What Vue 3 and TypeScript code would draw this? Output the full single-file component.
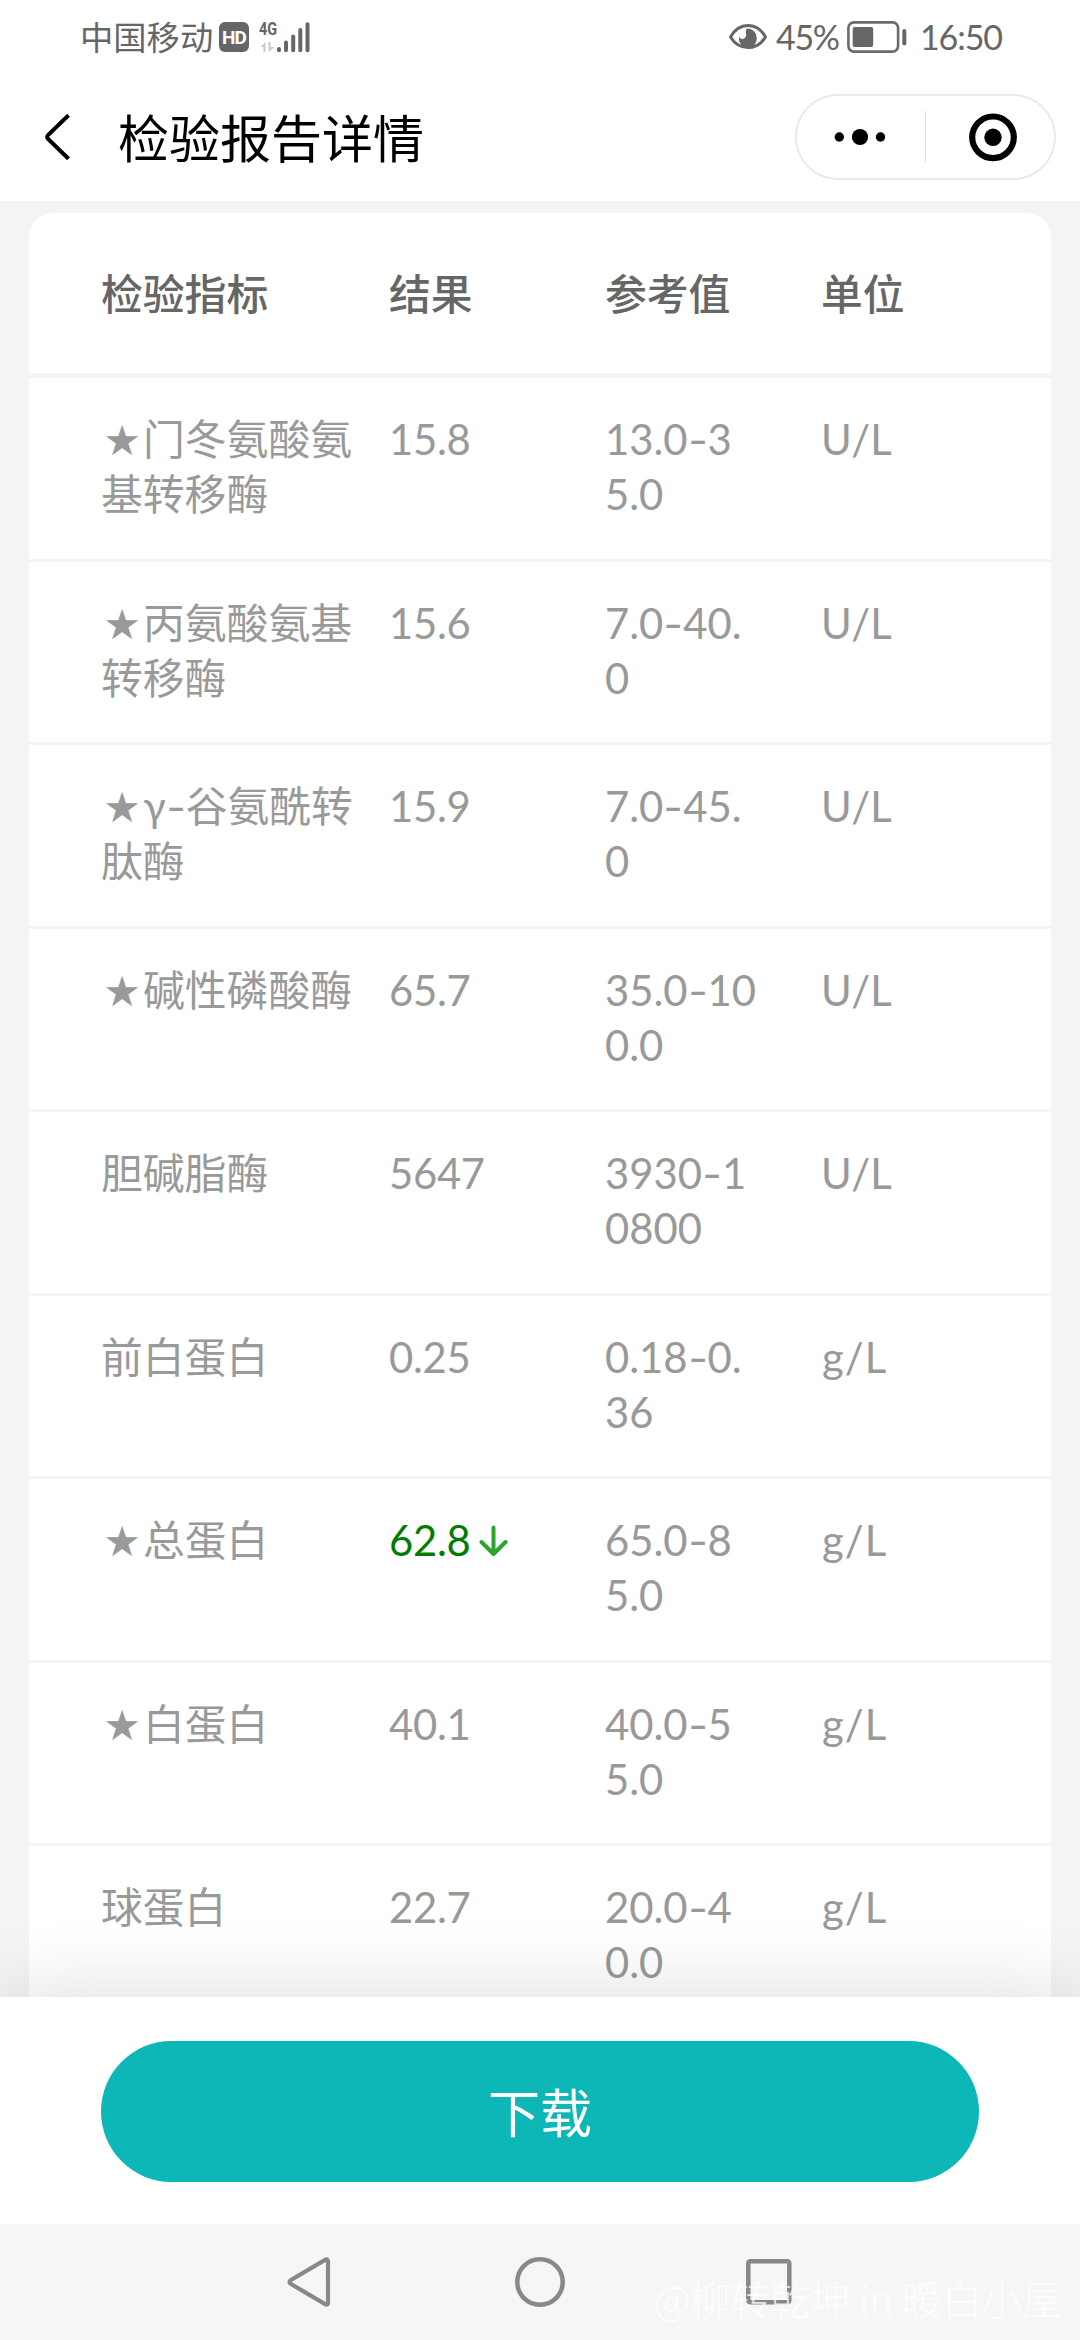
<script setup lang="ts">
interface Indicator {
  star: boolean
  name: string[]
  result: string
  low?: boolean
  range: string[]
  unit: string
}

const columns: string[] = ['检验指标', '结果', '参考值', '单位']

const rows: Indicator[] = [
  { star: true, name: ['门冬氨酸氨', '基转移酶'], result: '15.8', range: ['13.0-3', '5.0'], unit: 'U/L' },
  { star: true, name: ['丙氨酸氨基', '转移酶'], result: '15.6', range: ['7.0-40.', '0'], unit: 'U/L' },
  { star: true, name: ['γ-谷氨酰转', '肽酶'], result: '15.9', range: ['7.0-45.', '0'], unit: 'U/L' },
  { star: true, name: ['碱性磷酸酶'], result: '65.7', range: ['35.0-10', '0.0'], unit: 'U/L' },
  { star: false, name: ['胆碱脂酶'], result: '5647', range: ['3930-1', '0800'], unit: 'U/L' },
  { star: false, name: ['前白蛋白'], result: '0.25', range: ['0.18-0.', '36'], unit: 'g/L' },
  { star: true, name: ['总蛋白'], result: '62.8', low: true, range: ['65.0-8', '5.0'], unit: 'g/L' },
  { star: true, name: ['白蛋白'], result: '40.1', range: ['40.0-5', '5.0'], unit: 'g/L' },
  { star: false, name: ['球蛋白'], result: '22.7', range: ['20.0-4', '0.0'], unit: 'g/L' },
]

// Hyphens are set wider than the font's own, so each line is split around them.
const pieces = (line: string): string[] => line.split(/(-)/).filter((p) => p !== '')
</script>

<template>
  <div class="screen">
    <div class="status">
      <div class="status-left">
        <span class="carrier">中国移动</span>
        <span class="hd">HD</span>
        <div class="signal">
          <svg width="52" height="32" viewBox="0 0 52 32">
            <g fill="#c9c9c9">
              <path d="M0.5 26 L5.5 21 V31 H3.5 V26 Z" />
              <path d="M8.5 21 H10.5 V26 L14.5 26 L8.5 31 Z" />
            </g>
            <g stroke="#666" stroke-width="4" stroke-linecap="round">
              <path d="M19 28v1.3M26 21.5v7.8M33.2 15.5v13.8M40.3 9v20.3M47.5 3.2v26.1" />
            </g>
          </svg>
          <span class="net">4G</span>
        </div>
      </div>
      <div class="status-right">
        <svg class="eye" width="40" height="28" viewBox="0 0 40 28">
          <path d="M2.5 14C11 -1.2 29 -1.2 37.500 14C29 28 11 28 2.500 14Z" fill="none" stroke="#666" stroke-width="3" stroke-linejoin="round" />
          <path d="M19 5.500A9 9.800 0 1 1 11 13.500Q12.500 16.800 15.500 15.800Q19.300 14 17.800 9.500Q17.500 7 19 5.500Z" fill="#666" />
        </svg>
        <span class="percent">45%</span>
        <svg class="battery" width="60" height="32" viewBox="0 0 60 32">
          <rect x="1.400" y="1.400" width="49.700" height="29.200" rx="5.500" fill="none" stroke="#6c6c6c" stroke-width="2.600" />
          <rect x="5.700" y="6" width="20.500" height="20" rx="2" fill="#666" />
          <rect x="55.300" y="8" width="4" height="16.500" rx="2" fill="#666" />
        </svg>
        <span class="clock">16:50</span>
      </div>
    </div>

    <header class="bar">
      <svg class="back" width="28" height="50" viewBox="0 0 28 50">
        <path d="M24.500 3.200L3.800 23.400Q2.600 25 3.800 26.600L24.500 46.800" fill="none" stroke="#000" stroke-width="4" />
      </svg>
      <h1 class="title">检验报告详情</h1>
      <div class="capsule">
        <svg width="261" height="86" viewBox="0 0 261 86">
          <circle cx="44.300" cy="43" r="4.700" />
          <circle cx="65" cy="43" r="8.100" />
          <circle cx="85.500" cy="43" r="4.700" />
          <path d="M130.500 17v51" stroke="#dcdcdc" stroke-width="1" />
          <circle cx="198" cy="43.300" r="20.800" fill="none" stroke="#000" stroke-width="6.200" />
          <circle cx="198" cy="43.300" r="8.700" />
        </svg>
      </div>
    </header>

    <main class="content">
      <section class="card">
        <div class="line head">
          <span v-for="c in columns" :key="c">{{ c }}</span>
        </div>
        <div v-for="row in rows" :key="row.name[0]" class="line row">
          <div>
            <div v-for="(text, i) in row.name" :key="i" class="text"><span v-if="row.star && i === 0" class="star">★</span><span v-for="(p, j) in pieces(text)" :key="j" :class="{ dash: p === '-' }">{{ p }}</span></div>
          </div>
          <div class="text result" :class="{ low: row.low }">
            {{ row.result }}
            <svg v-if="row.low" class="arrow" width="29" height="32" viewBox="0 0 29 32">
              <path d="M14.500 2.500V28M2.500 17L14.500 29L26.500 17" fill="none" stroke="#2aa52c" stroke-width="4" stroke-linecap="round" stroke-linejoin="round" />
            </svg>
          </div>
          <div>
            <div v-for="(text, i) in row.range" :key="i" class="text"><span v-for="(p, j) in pieces(text)" :key="j" :class="{ dash: p === '-' }">{{ p }}</span></div>
          </div>
          <div class="text" :class="{ gram: row.unit === 'g/L' }">{{ row.unit }}</div>
        </div>
      </section>
    </main>

    <footer class="action">
      <button class="download" type="button">下载</button>
    </footer>

    <nav class="keys">
      <svg width="50" height="54" viewBox="0 0 50 54">
        <path d="M5.500 25.300L40.500 4.700Q43 3.600 43 6.500V47.500Q43 50.400 40.500 49.300L5.500 28.700Q3.800 27 5.500 25.300Z" fill="none" stroke="#888" stroke-width="4.200" />
      </svg>
      <svg width="54" height="54" viewBox="0 0 54 54">
        <circle cx="27" cy="27" r="22.700" fill="none" stroke="#888" stroke-width="4.500" />
      </svg>
      <svg width="50" height="54" viewBox="0 0 50 54">
        <rect x="4.300" y="6.300" width="41" height="41" rx="2" fill="none" stroke="#888" stroke-width="4.500" />
      </svg>
      <span class="watermark">@柳转乾坤 in 暖白小屋</span>
    </nav>
  </div>
</template>

<style>
body {
  margin: 0;
}
</style>

<style scoped>
.screen {
  width: 1080px;
  height: 2340px;
  display: flex;
  flex-direction: column;
  overflow: hidden;
  background: #f4f4f4;
  font-family: Lato, 'Noto Sans CJK SC', sans-serif;
}

.status {
  flex: none;
  height: 73px;
  box-sizing: border-box;
  padding: 0 77px 0 80px;
  display: flex;
  justify-content: space-between;
  background: #fff;
  color: #666;
}

.status-left,
.status-right {
  display: flex;
  align-items: center;
  height: 73px;
}

.carrier {
  width: 139px;
  font-size: 33.300px;
  line-height: 40px;
  white-space: nowrap;
}

.hd {
  width: 30px;
  height: 30px;
  border-radius: 6px;
  background: #666;
  color: #fff;
  font-family: Roboto, sans-serif;
  font-size: 19px;
  font-weight: 700;
  line-height: 31px;
  text-align: center;
  letter-spacing: -0.8px;
}

.signal {
  position: relative;
  height: 32px;
  margin-left: 11px;
}

.signal svg {
  display: block;
}

.net {
  position: absolute;
  left: -1px;
  top: -1px;
  font-family: Roboto, sans-serif;
  font-size: 19px;
  font-weight: 700;
  line-height: 18px;
  transform: scaleX(0.76);
  transform-origin: left;
}

.percent {
  width: 71px;
  margin-left: 8px;
  font-size: 34px;
  line-height: 40px;
  letter-spacing: -1.300px;
  white-space: nowrap;
}

.clock {
  width: 83px;
  margin-left: 13px;
  font-size: 34px;
  line-height: 40px;
  letter-spacing: -1.100px;
  white-space: nowrap;
}

.bar {
  flex: none;
  height: 128px;
  box-sizing: border-box;
  padding: 0 24px 0 44px;
  display: flex;
  align-items: center;
  background: #fff;
}

.back {
  flex: none;
}

.title {
  flex: 1;
  margin: 3px 0 0 46px;
  font-size: 51px;
  font-weight: 400;
  line-height: 60px;
  color: #000;
}

.capsule {
  width: 261px;
  height: 86px;
  border-radius: 43px;
  box-shadow: inset 0 0 0 1.800px #e8e8e8;
}

.capsule svg {
  display: block;
}

.content {
  flex: 1;
  min-height: 0;
  padding: 12px 29px 0;
  overflow: hidden;
}

.card {
  border-radius: 24px 24px 0 0;
  background: #fff;
}

.line {
  display: grid;
  grid-template-columns: 288px 216px 216px 158px;
  box-sizing: border-box;
  padding: 0 72px;
}

.head {
  height: 165px;
  padding-bottom: 3px;
  align-items: center;
  border-bottom: 5px solid #f4f4f4;
  font-size: 41.800px;
  font-weight: 500;
  color: #666;
}

.row {
  height: 183.500px;
  padding-top: 34px;
  border-bottom: 3px solid #f4f4f4;
  font-size: 41.800px;
  color: #999;
}

.text {
  height: 55px;
  line-height: 55px;
  white-space: nowrap;
}

.star {
  display: inline-block;
  width: 42px;
  text-align: center;
  font-family: 'DejaVu Sans', sans-serif;
  font-size: 42px;
  line-height: 40px;
}

.dash {
  display: inline-block;
  width: 20px;
  text-align: center;
  transform: scaleX(1.300);
}

.result {
  display: flex;
  align-items: center;
  letter-spacing: -0.3px;
}

.low {
  color: #007d00;
}

.gram {
  padding-left: 1px;
  letter-spacing: 1px;
}

.arrow {
  margin-left: 9px;
}

.action {
  position: relative;
  flex: none;
  height: 227px;
  box-sizing: border-box;
  padding: 44px 101px 0;
  background: #fff;
  box-shadow: 0 0 80px rgba(0, 0, 0, 0.15);
}

.download {
  display: block;
  width: 100%;
  height: 141px;
  padding: 3px 0 0;
  border: 0;
  border-radius: 71px;
  background: #0db6b7;
  color: #fff;
  font-family: inherit;
  font-size: 52px;
  font-weight: 400;
  line-height: 138px;
}

.keys {
  position: relative;
  flex: none;
  height: 116px;
  box-sizing: border-box;
  padding: 31px 286px 0 285px;
  display: flex;
  justify-content: space-between;
  align-items: flex-start;
  background: #f6f6f6;
}

.watermark {
  position: absolute;
  right: 18px;
  bottom: 12px;
  font-family: 'Noto Sans CJK SC', sans-serif;
  font-size: 40px;
  font-weight: 300;
  line-height: 60px;
  color: rgba(255, 255, 255, 0.8);
  white-space: nowrap;
}
</style>
